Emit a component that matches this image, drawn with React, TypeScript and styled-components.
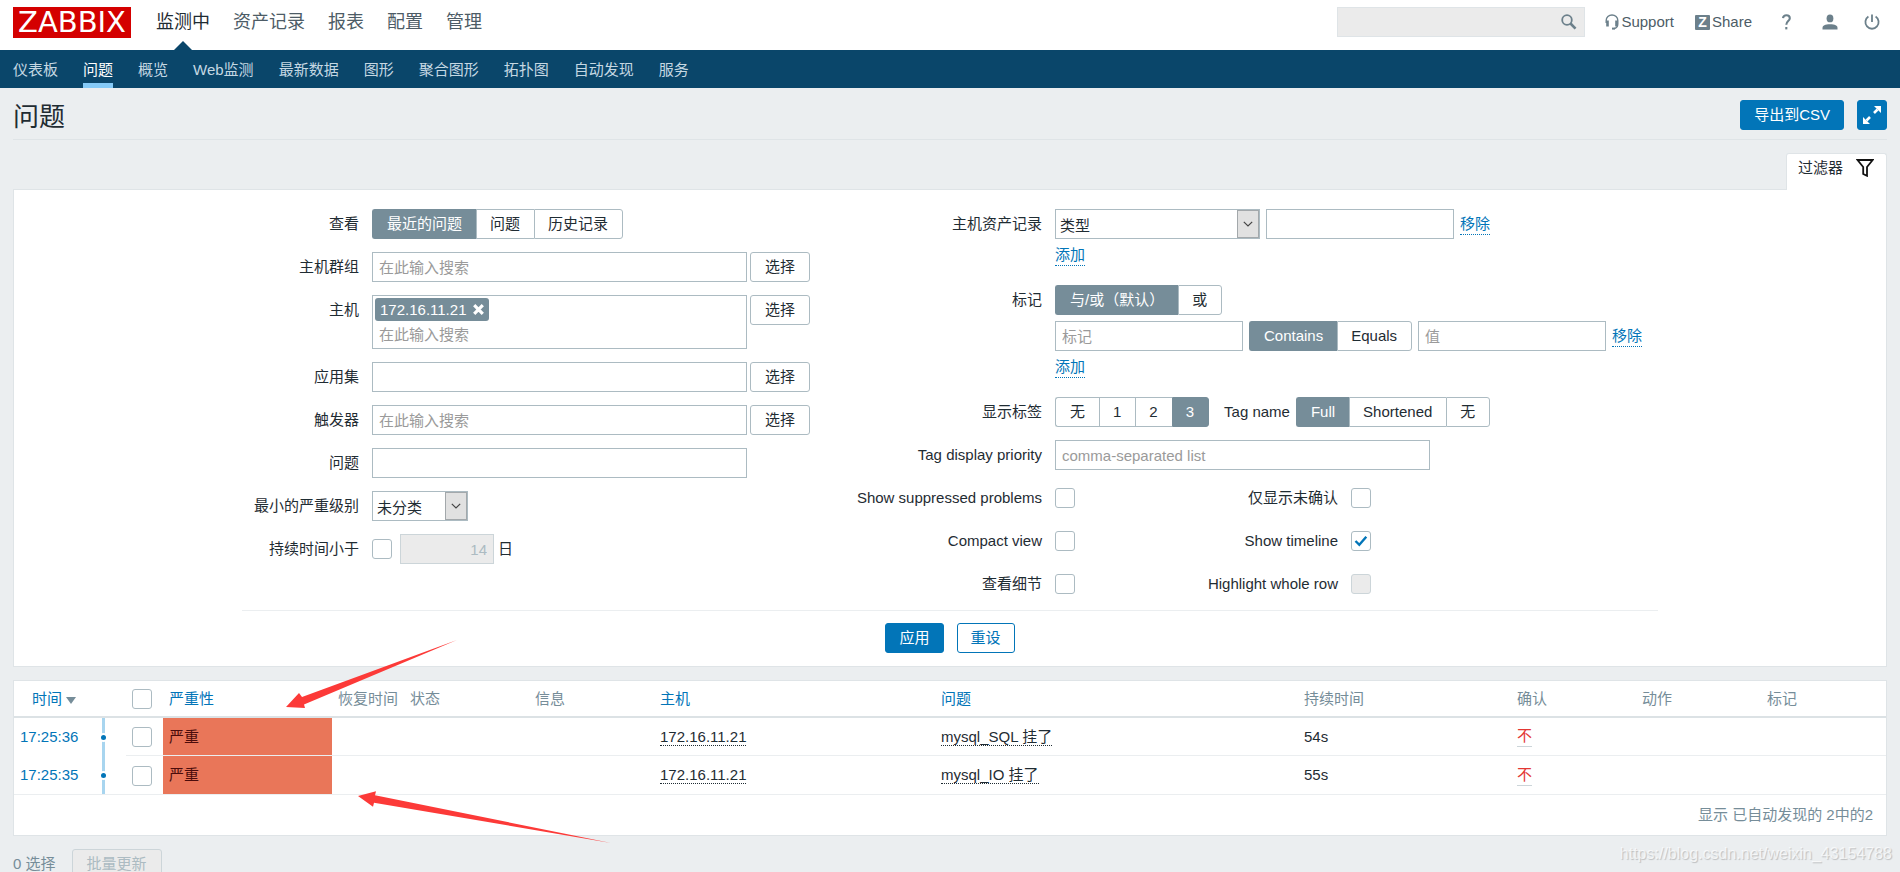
import React from "react";
import styled, { createGlobalStyle, css } from "styled-components";

const c = {
  text: "#1f2c33",
  muted: "#768d99",
  link: "#0275b8",
  nav: "#0a466a",
  page: "#ebeef0",
  line: "#dfe4e7",
  control: "#acbbc2",
  disabled: "#ebebeb",
  severity: "#e97659",
};

const GlobalStyle = createGlobalStyle`
  *, *::before, *::after { box-sizing: border-box; }
  body {
    margin: 0;
    background: ${c.page};
    color: ${c.text};
    font-family: "Liberation Sans", "Noto Sans CJK SC", sans-serif;
    font-size: 15px;
    line-height: 20px;
  }
  button, input, select { font: inherit; color: inherit; margin: 0; }
  a { color: ${c.link}; text-decoration: none; }
`;

const Page = styled.div`
  position: relative;
  height: 100vh;
  overflow-x: hidden;
  overflow-y: auto;
  scrollbar-width: none;
`;

/* ---------- Header ---------- */

const Header = styled.header`
  display: flex;
  align-items: flex-start;
  height: 50px;
  padding: 7px 20px 0 13px;
  background: #fff;
`;

const Logo = styled.a`
  width: 118px;
  height: 31px;
  background: #d40000;
  color: #fff;
  font-family: "DejaVu Sans", sans-serif;
  font-size: 29px;
  line-height: 31px;
  text-align: center;
`;

const MainMenu = styled.nav`
  display: flex;
  gap: 23px;
  margin-left: 25px;
`;

const MainLink = styled.a<{ $active?: boolean }>`
  position: relative;
  height: 43px;
  color: ${(p) => (p.$active ? c.text : "#4d5c66")};
  font-size: 18px;
  line-height: 30px;
  ${(p) =>
    p.$active &&
    css`
      &::after {
        content: "";
        position: absolute;
        left: 50%;
        bottom: 0;
        margin-left: -9px;
        border: 9px solid transparent;
        border-top: 0;
        border-bottom-color: ${c.nav};
      }
    `}
`;

const HeaderTools = styled.div`
  display: flex;
  align-items: center;
  height: 30px;
  margin-left: auto;
`;

const Search = styled.form`
  display: flex;
  align-items: center;
  width: 248px;
  height: 30px;
  margin-right: 20px;
  padding-right: 7px;
  background: ${c.disabled};
  border: 1px solid ${c.line};
`;

const SearchInput = styled.input`
  flex: 1;
  min-width: 0;
  height: 28px;
  border: 0;
  background: transparent;
`;

const IconButton = styled.button`
  display: flex;
  padding: 0;
  border: 0;
  background: none;
`;

const ToolLink = styled.a<{ $gap?: number }>`
  display: flex;
  align-items: center;
  gap: 2px;
  margin-right: ${(p) => p.$gap ?? 0}px;
  color: #4d5c66;
`;

const ShareMark = styled.span`
  width: 15px;
  height: 15px;
  border-radius: 1px;
  background: #6c808b;
  color: #fff;
  font-size: 14px;
  font-weight: bold;
  line-height: 15px;
  text-align: center;
`;

const SubMenu = styled.nav`
  display: flex;
  gap: 25px;
  height: 38px;
  padding-left: 13px;
  background: ${c.nav};
`;

const SubLink = styled.a<{ $active?: boolean }>`
  height: 38px;
  color: ${(p) => (p.$active ? "#fff" : "#c5d8e3")};
  line-height: 40px;
  border-bottom: 5px solid ${(p) => (p.$active ? "#85caf7" : "transparent")};
`;

/* ---------- Controls ---------- */

const Button = styled.button<{ $kind?: "primary" | "outline" }>`
  height: 30px;
  padding: 0 ${(p) => (p.$kind ? 13 : 14)}px;
  border: 1px solid ${(p) => (p.$kind ? c.link : c.control)};
  border-radius: 3px;
  background: ${(p) => (p.$kind === "primary" ? c.link : "#fff")};
  color: ${(p) => (p.$kind === "primary" ? "#fff" : p.$kind === "outline" ? c.link : c.text)};
  line-height: 28px;
  &:disabled {
    border-color: #ccd5d9;
    background: ${c.disabled};
    color: ${c.control};
  }
`;

const SquareButton = styled(Button)`
  display: grid;
  place-items: center;
  width: 30px;
  padding: 0;
`;

const TextInput = styled.input<{ $width: number }>`
  width: ${(p) => p.$width}px;
  height: 30px;
  padding: 0 6px;
  border: 1px solid ${c.control};
  border-radius: 0;
  background: #fff;
  &::placeholder { color: #9a9a9a; opacity: 1; }
  &:disabled {
    border-color: #ccd5d9;
    background: ${c.disabled};
    color: ${c.control};
    text-align: right;
  }
`;

const SelectBox = styled.span<{ $width: number }>`
  display: grid;
  grid-template-columns: 1fr 22px;
  width: ${(p) => p.$width}px;
  height: 30px;
  border: 1px solid ${c.control};
  background: #fff;
`;

const NativeSelect = styled.select`
  grid-area: 1 / 1 / 2 / 3;
  appearance: none;
  height: 28px;
  padding: 3px 4px 0;
  border: 0;
  background: transparent;
`;

const SelectArrow = styled.span`
  grid-area: 1 / 2;
  display: grid;
  place-items: center;
  border: 1px solid #a3a8ab;
  background: #e1e1e1;
  pointer-events: none;
`;

const Segments = styled.div`
  display: flex;
`;

const Segment = styled.label`
  position: relative;
  input {
    position: absolute;
    inset: 0;
    opacity: 0;
  }
  span {
    display: block;
    height: 30px;
    padding: 0 14px 0 13px;
    border: 1px solid ${c.control};
    border-right-width: 0;
    background: #fff;
    line-height: 28px;
    white-space: nowrap;
  }
  &:first-child span { padding-left: 14px; border-radius: 3px 0 0 3px; }
  &:last-child span { border-right-width: 1px; border-radius: 0 3px 3px 0; }
  input:checked + span {
    border-color: ${c.muted};
    background: ${c.muted};
    color: #fff;
  }
`;

const CheckFrame = styled.span`
  display: inline-grid;
  place-items: center;
  width: 20px;
  height: 20px;
  vertical-align: middle;
  input {
    grid-area: 1 / 1;
    appearance: none;
    width: 20px;
    height: 20px;
    border: 1px solid ${c.control};
    border-radius: 3px;
    background: #fff;
  }
  input:disabled { border-color: #ccd5d9; background: ${c.disabled}; }
  svg { grid-area: 1 / 1; visibility: hidden; pointer-events: none; }
  input:checked + svg { visibility: visible; }
`;

type CheckProps = React.InputHTMLAttributes<HTMLInputElement>;
const Check = (props: CheckProps) => (
  <CheckFrame>
    <input type="checkbox" {...props} />
    <svg width="14" height="12" viewBox="0 0 14 12" fill="none" stroke={c.link} strokeWidth="2.4">
      <path d="M1.500 6l3.800 3.800L12.300 1.800" />
    </svg>
  </CheckFrame>
);

const Segmented = ({ name, options, value }: { name: string; options: string[]; value: string }) => (
  <Segments role="radiogroup" aria-label={name}>
    {options.map((o) => (
      <Segment key={o}>
        <input type="radio" name={name} defaultChecked={o === value} />
        <span>{o}</span>
      </Segment>
    ))}
  </Segments>
);

const Select = ({ id, width, option }: { id: string; width: number; option: string }) => (
  <SelectBox $width={width}>
    <NativeSelect id={id}>
      <option>{option}</option>
    </NativeSelect>
    <SelectArrow>
      <svg width="10" height="6" viewBox="0 0 10 6" fill="none" stroke="#444" strokeWidth="1.2">
        <path d="M.8.8L5 5 9.200.8" />
      </svg>
    </SelectArrow>
  </SelectBox>
);

/* ---------- Filter ---------- */

const Main = styled.main`
  padding: 0 13px;
`;

const TitleBar = styled.div`
  display: flex;
  align-items: flex-start;
  justify-content: space-between;
  height: 52px;
  padding-top: 12px;
  border-bottom: 1px solid ${c.line};
`;

const Title = styled.h1`
  margin: 0;
  font-size: 26px;
  font-weight: normal;
  line-height: 34px;
`;

const TitleActions = styled.div`
  display: flex;
  gap: 13px;
`;

const TabRow = styled.div`
  display: flex;
  justify-content: flex-end;
  margin-top: 13px;
`;

const FilterTab = styled.a`
  display: flex;
  align-items: flex-start;
  gap: 13px;
  height: 37px;
  margin-bottom: -1px;
  padding: 4px 12px 0 11px;
  z-index: 1;
  border: 1px solid ${c.line};
  border-bottom: 0;
  border-radius: 3px 3px 0 0;
  background: #fff;
  color: ${c.text};
`;

const Panel = styled.section`
  border: 1px solid ${c.line};
  background: #fff;
`;

const FilterForm = styled.form`
  max-width: 1416px;
  margin: 0 auto;
  padding: 19px 0 13px;
`;

const FilterColumns = styled.div`
  display: flex;
  padding-bottom: 11px;
  border-bottom: 1px solid #ebeef0;
`;

const FilterColumn = styled.div<{ $grow: number }>`
  display: flex;
  flex: ${(p) => p.$grow} 1 0;
  flex-direction: column;
  gap: 13px;
`;

const FieldRow = styled.div<{ $label: number }>`
  display: grid;
  grid-template-columns: ${(p) => p.$label}px 1fr;
  column-gap: 13px;
`;

const FieldLabel = styled.label`
  display: flex;
  justify-content: flex-end;
  line-height: 30px;
  white-space: nowrap;
`;

const Inline = styled.div<{ $gap?: number }>`
  display: flex;
  align-items: flex-start;
  gap: ${(p) => p.$gap ?? 3}px;
`;

const Stack = styled.div`
  display: flex;
  flex-direction: column;
  align-items: flex-start;
  gap: 6px;
`;

const CheckLine = styled.div`
  display: grid;
  grid-template-columns: 20px 250px 20px;
  column-gap: 13px;
  align-items: center;
  height: 30px;
`;

const AgeLine = styled.div`
  display: flex;
  align-items: center;
  height: 30px;
  gap: 8px;
`;

const DottedLink = styled.a<{ $dark?: boolean }>`
  color: ${(p) => (p.$dark ? c.text : c.link)};
  border-bottom: 1px dotted currentColor;
  line-height: 20px;
`;

const AddLink = styled(DottedLink)`
  display: block;
  height: 21px;
  margin-bottom: 6px;
`;

const RemoveLink = styled(DottedLink)`
  display: block;
  height: 21px;
  margin-top: 5px;
`;

const MultiSelect = styled.div`
  width: 375px;
  height: 54px;
  padding: 2px;
  border: 1px solid ${c.control};
  background: #fff;
`;

const Chip = styled.span`
  display: flex;
  align-items: center;
  gap: 7px;
  width: fit-content;
  height: 23px;
  padding: 0 5px;
  border-radius: 3px;
  background: ${c.muted};
  color: #fff;
`;

const ChipInput = styled.input`
  display: block;
  width: 100%;
  height: 26px;
  padding: 0 4px;
  border: 0;
  background: transparent;
  &::placeholder { color: #9a9a9a; opacity: 1; }
`;

const FormButtons = styled.div`
  display: flex;
  justify-content: center;
  gap: 13px;
  padding-top: 12px;
`;

/* ---------- Problem table ---------- */

const TablePanel = styled(Panel)`
  margin-top: 13px;
`;

const Table = styled.table`
  width: 100%;
  table-layout: fixed;
  border-collapse: separate;
  border-spacing: 0;
`;

const Th = styled.th<{ $right?: boolean }>`
  height: 37px;
  padding: 0 6px;
  border-bottom: 2px solid #dce2e5;
  color: ${c.muted};
  font-weight: normal;
  text-align: ${(p) => (p.$right ? "right" : "left")};
  white-space: nowrap;
`;

const Td = styled.td<{ $line?: boolean; $right?: boolean; $flush?: boolean }>`
  height: 38px;
  padding: 0 ${(p) => (p.$flush ? 0 : 6)}px;
  border-bottom: ${(p) => (p.$line ? 1 : 0)}px solid #ebeef0;
  text-align: ${(p) => (p.$right ? "right" : "left")};
  white-space: nowrap;
`;

const SeverityTd = styled(Td)`
  background: ${c.severity};
  background-clip: padding-box;
  color: #4b0c0c;
`;

const SortArrow = styled.span`
  display: inline-block;
  margin-left: 4px;
  border: 5px solid transparent;
  border-top: 7px solid ${c.muted};
  border-bottom: 0;
`;

const Timeline = styled.div`
  display: flex;
  align-items: center;
  justify-content: center;
  width: 3px;
  height: 38px;
  margin-left: 20px;
  background: #a8d5ef;
  &::before {
    content: "";
    flex: none;
    width: 5px;
    height: 5px;
    border-radius: 50%;
    background: ${c.link};
    box-shadow: 0 0 0 2px #fff;
  }
`;

const AckLink = styled.a`
  display: inline-block;
  height: 20px;
  border-bottom: 1px solid #ccd5d9;
  color: #e33734;
  line-height: 18px;
`;

const TableFooter = styled.div`
  height: 40px;
  padding-right: 13px;
  color: ${c.muted};
  line-height: 40px;
  text-align: right;
`;

const BulkActions = styled.div`
  display: flex;
  gap: 16px;
  padding: 13px 0;
  color: ${c.muted};
  line-height: 30px;
`;

const Annotations = styled.svg`
  position: absolute;
  top: 640px;
  left: 286px;
  pointer-events: none;
`;

const Watermark = styled.div`
  position: absolute;
  right: 8px;
  top: 844px;
  color: rgba(255, 255, 255, 0.7);
  font-size: 16px;
  text-shadow: 1px 1px 1px rgba(0, 0, 0, 0.2);
`;

const columns = [68, 44, 37, 169, 72, 125, 125, 281, 363, 213, 125, 125, 125];

const problems = [
  { time: "17:25:36", name: "mysql_SQL 挂了", duration: "54s" },
  { time: "17:25:35", name: "mysql_IO 挂了", duration: "55s" },
];

const subMenu = ["仪表板", "问题", "概览", "Web监测", "最新数据", "图形", "聚合图形", "拓扑图", "自动发现", "服务"];

const LEFT = 117;
const RIGHT = 182;

const App = () => (
  <Page>
    <GlobalStyle />
    <Header>
      <Logo href="#">ZABBIX</Logo>
      <MainMenu>
        {["监测中", "资产记录", "报表", "配置", "管理"].map((m, i) => (
          <MainLink key={m} href="#" $active={i === 0}>{m}</MainLink>
        ))}
      </MainMenu>
      <HeaderTools>
        <Search role="search">
          <SearchInput type="text" aria-label="Search" />
          <IconButton type="button" aria-label="Search">
            <svg width="16" height="16" viewBox="0 0 16 16" fill="none" stroke="#6c808b">
              <circle cx="6" cy="6" r="4.800" strokeWidth="1.8" />
              <path d="M9.500 9.500l5 5.200" strokeWidth="2.6" />
            </svg>
          </IconButton>
        </Search>
        <ToolLink href="#" $gap={21}>
          <svg width="14" height="16" viewBox="0 0 14 16" fill="none" stroke="#6c808b">
            <path d="M1.200 9V6.500a5.800 5.500 0 0 1 11.600 0V10c0 3-1.500 4.200-4 4.600" strokeWidth="1.4" />
            <path d="M2.500 6.500v6M11.500 6.500v6" strokeWidth="2.6" />
            <path d="M7 14.600h3" strokeWidth="2" />
          </svg>
          Support
        </ToolLink>
        <ToolLink href="#" $gap={30}>
          <ShareMark aria-hidden>Z</ShareMark>
          Share
        </ToolLink>
        <ToolLink href="#" aria-label="Help" $gap={31}>
          <svg width="9" height="16" viewBox="0 0 9 16" fill="none" stroke="#6c808b" strokeWidth="2.1">
            <path d="M1 4.200C1.200 2.200 2.500 1.200 4.400 1.200c2 0 3.400 1.200 3.400 3 0 2.900-3.500 3-3.500 6.600" />
            <path d="M4.300 13v2.400" />
          </svg>
        </ToolLink>
        <ToolLink href="#" aria-label="User profile" $gap={26}>
          <svg width="16" height="16" viewBox="0 0 16 16" fill="#6c808b">
            <ellipse cx="8" cy="4.400" rx="3.400" ry="3.900" />
            <path d="M.5 15.500v-1.500C.5 11.500 3 10.300 8 10.300s7.500 1.200 7.500 3.700v1.500z" />
          </svg>
        </ToolLink>
        <ToolLink href="#" aria-label="Sign out">
          <svg width="16" height="16" viewBox="0 0 16 16" fill="none" stroke="#6c808b" strokeWidth="1.8">
            <path d="M8 .5v7.500M4.400 2.600A6.600 6.600 0 1 0 11.600 2.600" />
          </svg>
        </ToolLink>
      </HeaderTools>
    </Header>
    <SubMenu>
      {subMenu.map((m, i) => (
        <SubLink key={m} href="#" $active={i === 1}>{m}</SubLink>
      ))}
    </SubMenu>
    <Main>
      <TitleBar>
        <Title>问题</Title>
        <TitleActions>
          <Button $kind="primary">导出到CSV</Button>
          <SquareButton $kind="primary" aria-label="Fullscreen">
            <svg width="18" height="18" viewBox="0 0 18 18" fill="#fff" stroke="#fff" strokeWidth="2.6">
              <path d="M11 0h7v7z M0 11v7h7z" stroke="none" />
              <path d="M11 7L14.500 3.500M7 11L3.500 14.500" />
            </svg>
          </SquareButton>
        </TitleActions>
      </TitleBar>
      <TabRow>
        <FilterTab href="#">
          过滤器
          <svg width="18" height="19" viewBox="0 0 18 19" fill="none" stroke="#111" strokeWidth="1.8">
            <path d="M1.500 2h15.200L11 9v8.800L7.200 16V9z" />
          </svg>
        </FilterTab>
      </TabRow>
      <Panel>
        <FilterForm>
          <FilterColumns>
            <FilterColumn $grow={618}>
              <FieldRow $label={LEFT}>
                <FieldLabel as="span">查看</FieldLabel>
                <Segmented name="查看" options={["最近的问题", "问题", "历史记录"]} value="最近的问题" />
              </FieldRow>
              <FieldRow $label={LEFT}>
                <FieldLabel htmlFor="groups">主机群组</FieldLabel>
                <Inline>
                  <TextInput id="groups" $width={375} placeholder="在此输入搜索" />
                  <Button type="button">选择</Button>
                </Inline>
              </FieldRow>
              <FieldRow $label={LEFT}>
                <FieldLabel htmlFor="hosts">主机</FieldLabel>
                <Inline>
                  <MultiSelect>
                    <Chip>
                      172.16.11.21
                      <IconButton type="button" aria-label="移除 172.16.11.21">
                        <svg width="11" height="11" viewBox="0 0 11 11" stroke="#fff" strokeWidth="3.2">
                          <path d="M1.200 1.200l8.600 8.600M9.800 1.200L1.200 9.800" />
                        </svg>
                      </IconButton>
                    </Chip>
                    <ChipInput id="hosts" placeholder="在此输入搜索" />
                  </MultiSelect>
                  <Button type="button">选择</Button>
                </Inline>
              </FieldRow>
              <FieldRow $label={LEFT}>
                <FieldLabel htmlFor="application">应用集</FieldLabel>
                <Inline>
                  <TextInput id="application" $width={375} />
                  <Button type="button">选择</Button>
                </Inline>
              </FieldRow>
              <FieldRow $label={LEFT}>
                <FieldLabel htmlFor="triggers">触发器</FieldLabel>
                <Inline>
                  <TextInput id="triggers" $width={375} placeholder="在此输入搜索" />
                  <Button type="button">选择</Button>
                </Inline>
              </FieldRow>
              <FieldRow $label={LEFT}>
                <FieldLabel htmlFor="problem">问题</FieldLabel>
                <TextInput id="problem" $width={375} />
              </FieldRow>
              <FieldRow $label={LEFT}>
                <FieldLabel htmlFor="severity">最小的严重级别</FieldLabel>
                <Select id="severity" width={96} option="未分类" />
              </FieldRow>
              <FieldRow $label={LEFT}>
                <FieldLabel htmlFor="age">持续时间小于</FieldLabel>
                <AgeLine>
                  <Check id="age" />
                  <Inline as="label" $gap={4}>
                    <TextInput $width={94} defaultValue="14" disabled />
                    <FieldLabel as="span">日</FieldLabel>
                  </Inline>
                </AgeLine>
              </FieldRow>
            </FilterColumn>
            <FilterColumn $grow={798}>
              <FieldRow $label={RIGHT}>
                <FieldLabel htmlFor="inventory">主机资产记录</FieldLabel>
                <Stack>
                  <Inline $gap={6}>
                    <Select id="inventory" width={205} option="类型" />
                    <TextInput $width={188} aria-label="主机资产记录" />
                    <RemoveLink href="#">移除</RemoveLink>
                  </Inline>
                  <AddLink href="#">添加</AddLink>
                </Stack>
              </FieldRow>
              <FieldRow $label={RIGHT}>
                <FieldLabel as="span">标记</FieldLabel>
                <Stack>
                  <Segmented name="标记" options={["与/或（默认）", "或"]} value="与/或（默认）" />
                  <Inline $gap={6}>
                    <TextInput $width={188} placeholder="标记" aria-label="标记" />
                    <Segmented name="operator" options={["Contains", "Equals"]} value="Contains" />
                    <TextInput $width={188} placeholder="值" aria-label="值" />
                    <RemoveLink href="#">移除</RemoveLink>
                  </Inline>
                  <AddLink href="#">添加</AddLink>
                </Stack>
              </FieldRow>
              <FieldRow $label={RIGHT}>
                <FieldLabel as="span">显示标签</FieldLabel>
                <Inline $gap={15}>
                  <Segmented name="显示标签" options={["无", "1", "2", "3"]} value="3" />
                  <Inline $gap={6}>
                    <FieldLabel as="span">Tag name</FieldLabel>
                    <Segmented name="Tag name" options={["Full", "Shortened", "无"]} value="Full" />
                  </Inline>
                </Inline>
              </FieldRow>
              <FieldRow $label={RIGHT}>
                <FieldLabel htmlFor="priority">Tag display priority</FieldLabel>
                <TextInput id="priority" $width={375} placeholder="comma-separated list" />
              </FieldRow>
              <FieldRow $label={RIGHT}>
                <FieldLabel htmlFor="suppressed">Show suppressed problems</FieldLabel>
                <CheckLine>
                  <Check id="suppressed" />
                  <FieldLabel htmlFor="unack">仅显示未确认</FieldLabel>
                  <Check id="unack" />
                </CheckLine>
              </FieldRow>
              <FieldRow $label={RIGHT}>
                <FieldLabel htmlFor="compact">Compact view</FieldLabel>
                <CheckLine>
                  <Check id="compact" />
                  <FieldLabel htmlFor="timeline">Show timeline</FieldLabel>
                  <Check id="timeline" defaultChecked />
                </CheckLine>
              </FieldRow>
              <FieldRow $label={RIGHT}>
                <FieldLabel htmlFor="details">查看细节</FieldLabel>
                <CheckLine>
                  <Check id="details" />
                  <FieldLabel htmlFor="highlight">Highlight whole row</FieldLabel>
                  <Check id="highlight" disabled />
                </CheckLine>
              </FieldRow>
            </FilterColumn>
          </FilterColumns>
          <FormButtons>
            <Button type="button" $kind="primary">应用</Button>
            <Button type="button" $kind="outline">重设</Button>
          </FormButtons>
        </FilterForm>
      </Panel>
      <TablePanel>
        <Table>
          <colgroup>
            {columns.map((w, i) => (
              <col key={i} width={w} />
            ))}
          </colgroup>
          <thead>
            <tr>
              <Th $right><a href="#">时间<SortArrow /></a></Th>
              <Th />
              <Th><Check aria-label="全选" /></Th>
              <Th><a href="#">严重性</a></Th>
              <Th>恢复时间</Th>
              <Th>状态</Th>
              <Th>信息</Th>
              <Th><a href="#">主机</a></Th>
              <Th><a href="#">问题</a></Th>
              <Th>持续时间</Th>
              <Th>确认</Th>
              <Th>动作</Th>
              <Th>标记</Th>
            </tr>
          </thead>
          <tbody>
            {problems.map((p, i) => {
              const last = i === problems.length - 1;
              return (
                <tr key={p.time}>
                  <Td $right $line={last}><a href="#">{p.time}</a></Td>
                  <Td $flush $line={last}><Timeline /></Td>
                  <Td $line><Check aria-label={p.name} /></Td>
                  <SeverityTd $line>严重</SeverityTd>
                  <Td $line />
                  <Td $line />
                  <Td $line />
                  <Td $line><DottedLink $dark href="#">172.16.11.21</DottedLink></Td>
                  <Td $line><DottedLink $dark href="#">{p.name}</DottedLink></Td>
                  <Td $line>{p.duration}</Td>
                  <Td $line><AckLink href="#">不</AckLink></Td>
                  <Td $line />
                  <Td $line />
                </tr>
              );
            })}
          </tbody>
        </Table>
        <TableFooter>显示 已自动发现的 2中的2</TableFooter>
      </TablePanel>
      <BulkActions>
        <span>0 选择</span>
        <Button type="button" disabled>批量更新</Button>
      </BulkActions>
    </Main>
    <Annotations width="326" height="204" viewBox="0 0 326 204" fill="#fc3a38">
      <path d="M171 0L16 57 13 53 0 67 19 68 18 64.500z" />
      <path d="M325 203L89 155.300 90 151.300 72 156 87 166.700 88 162.700z" />
    </Annotations>
    <Watermark>https://blog.csdn.net/weixin_43154788</Watermark>
  </Page>
);

export default App;
